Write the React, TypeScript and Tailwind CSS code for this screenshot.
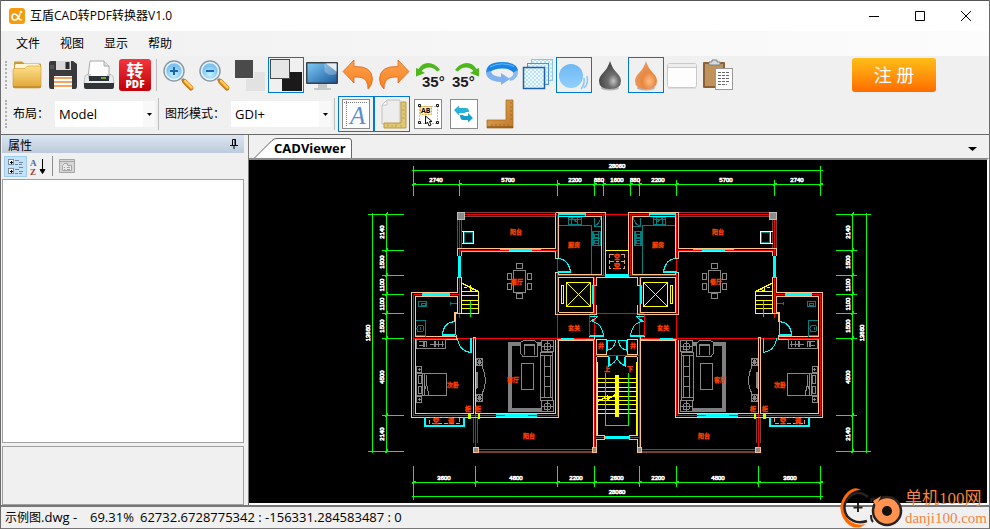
import React from 'react';

const UI_FONT = "font-['Open_Sans','Noto_Sans_CJK_SC',sans-serif]";

type IconProps = { children: React.ReactNode };

const Icon: React.FC<IconProps> = ({ children }) => (
  <svg viewBox="0 0 36 36" className="block size-full" aria-hidden="true">
    {children}
  </svg>
);

const FolderIcon = () => (
  <Icon>
    <path d="M5 8V5.500q0-1 1-1h7l2.500 2H31q1 0 1 1V27H5z" fill="#c99a3c" />
    <path d="M7 7h22l2 1v6H6V8z" fill="#fff6d8" />
    <path d="M4 13q0-1.500 1.500-1.500H16l2.500-2.500H30.500q1.500 0 1.500 1.500V29q0 2-2 2H6q-2 0-2-2z" fill="url(#folder)" stroke="#d0972b" strokeWidth=".6" />
    <path d="M4 30h28" stroke="#b07a20" />
    <defs>
      <linearGradient id="folder" x2="0" y2="1">
        <stop stopColor="#ffe08c" />
        <stop offset="1" stopColor="#dfa636" />
      </linearGradient>
    </defs>
  </Icon>
);

const SaveIcon = () => (
  <Icon>
    <path d="M6 4h22l4 3v22q0 3-2 3H6q-2 0-2-3V6q0-2 2-2z" fill="#3a3a3c" />
    <path d="M11 4h15v9H11z" fill="#d9d9dc" />
    <path d="M20.500 5h4v7h-4z" fill="#2b2b2d" />
    <path d="M9 19h18v13H9z" fill="#fff" />
    <path d="M9 21h18M9 25h18M9 29h18" stroke="#f6a35c" strokeWidth="2" />
    <path d="M5 8h4v4H5z" fill="#55565a" />
  </Icon>
);

const PrintIcon = () => (
  <Icon>
    <path d="M9 4h14l5 5v11H7z" fill="#fdfdfd" stroke="#aaa" />
    <path d="M23 4v5h5" fill="#e3e3e3" stroke="#aaa" />
    <path d="M3 25l4-8h3v4h16v-4h3l4 8v5H3z" fill="#cfd2d5" />
    <path d="M4 19l3-2 1 5h20l1-5 3 2 1 8H3z" fill="#e9ebed" stroke="#a5a8ab" strokeWidth=".6" />
    <path d="M8 19h20v5H8z" fill="#2c3237" />
    <path d="M20 21h5" stroke="#7dd13a" strokeWidth="1.500" />
    <path d="M3 26h30v4q0 2-2 2H5q-2 0-2-2z" fill="#303437" />
  </Icon>
);

const PdfIcon = () => (
  <Icon>
    <rect x="2" y="2" width="32" height="32" rx="3" fill="url(#pdf)" />
    <text x="18" y="20" textAnchor="middle" fontSize="17" fontWeight="700" fill="#fff" className="font-['Noto_Sans_CJK_SC',sans-serif]">转</text>
    <text x="18" y="31" textAnchor="middle" fontSize="10" fontWeight="800" fill="#fff">PDF</text>
    <defs>
      <linearGradient id="pdf" x2="0" y2="1">
        <stop stopColor="#f5353b" />
        <stop offset="1" stopColor="#c00008" />
      </linearGradient>
    </defs>
  </Icon>
);

const ZoomIcon: React.FC<{ plus?: boolean }> = ({ plus }) => (
  <Icon>
    <path d="M22 22l3 3" stroke="#888" strokeWidth="3" />
    <path d="M24.500 24.500l6.500 6.500" stroke="#c77f19" strokeWidth="5" strokeLinecap="round" />
    <path d="M25 24l6.500 6.500" stroke="#ffc65a" strokeWidth="2.500" strokeLinecap="round" />
    <circle cx="14" cy="14" r="10" fill="#8dd0fa" stroke="#8c979f" strokeWidth="1.500" />
    <circle cx="14" cy="14" r="8.500" fill="url(#lens)" stroke="#e8f5ff" strokeWidth="1.500" />
    <path d={plus ? 'M10 14h8M14 10v8' : 'M10 14h8'} stroke="#1767ad" strokeWidth="2" />
    <defs>
      <radialGradient id="lens" cy=".7">
        <stop stopColor="#c9f0ff" />
        <stop offset="1" stopColor="#7cc3f2" />
      </radialGradient>
    </defs>
  </Icon>
);

const DarkBackIcon = () => (
  <Icon>
    <rect x="14" y="15" width="19" height="19" fill="#e2e2e2" />
    <rect x="2" y="2" width="20" height="20" fill="#f0f0f0" />
    <rect x="3" y="3" width="18" height="18" fill="#4a4a4a" />
  </Icon>
);

const LightBackIcon = () => (
  <Icon>
    <rect x="14" y="15" width="20" height="19" fill="#1a1a1a" />
    <rect x="2.500" y="2.500" width="19" height="19" fill="#e6e6e6" stroke="#4a4a4a" />
  </Icon>
);

const MonitorIcon = () => (
  <Icon>
    <path d="M14 27h9v4h4v2H10v-2h4z" fill="#c6c9cc" />
    <rect x="2" y="5" width="32" height="22" rx="1" fill="#3b4147" />
    <rect x="3.500" y="6.500" width="29" height="19" fill="url(#screen)" />
    <path d="M20 6.500h12.500V17q-8 3-12-3z" fill="#fff" opacity=".25" />
    <path d="M22 6.500l10.500 8v-8z" fill="#e6edf2" />
    <defs>
      <linearGradient id="screen" x2="1" y2="1">
        <stop stopColor="#7fc9f4" />
        <stop offset="1" stopColor="#1c5c9f" />
      </linearGradient>
    </defs>
  </Icon>
);

const TurnIcon: React.FC<{ forward?: boolean }> = ({ forward }) => (
  <Icon>
    <g transform={forward ? 'translate(36 0) scale(-1 1)' : undefined}>
      <path d="M3 14.500L14 3v6.500q18-1 18.500 12.500q0 6-4.500 10q0-10-7-11.500-3-.5-7-.5v6z" fill="url(#turn)" stroke="#d65f16" strokeWidth=".7" />
      <defs>
        <linearGradient id="turn" x2="0" y2="1">
          <stop stopColor="#ffa04e" />
          <stop offset="1" stopColor="#f5821f" />
        </linearGradient>
      </defs>
    </g>
  </Icon>
);

const RotateIcon: React.FC<{ right?: boolean }> = ({ right }) => (
  <Icon>
    <path
      d="M4 11v8.500l9-3.500-3.500-2q3-3.500 7.500-3.500 5 0 8 4l3-1.500Q23 6 16 6q-6 0-9.500 6z"
      fill="#4cb81a"
      transform={right ? 'translate(35 0) scale(-1 1)' : undefined}
    />
    <text x={right ? 4 : 10} y="30" fontSize="15" fontWeight="700" fill="#1c1c1c" className="font-['Liberation_Sans',sans-serif]">35°</text>
  </Icon>
);

const OrbitIcon = () => (
  <Icon>
    <path d="M2 16Q2 5 18 5t16 10q-3 5-6 6 3-4 1-6-3-3.500-11-3.500T6 15z" fill="#1c86e8" />
    <path d="M2 15l5-1q0 5 10 6v-4l9 6-9 6v-3Q2 24 2 15z" fill="#7fb0f0" />
    <path d="M34 13q1 9-8 11l-1-3q5-2 5-6z" fill="#8dbbf0" />
    <path d="M6 10Q18 4 30 9.500" fill="none" stroke="#60b9ff" />
  </Icon>
);

const LayersIcon = () => (
  <Icon>
    <defs>
      <pattern id="check" width="4" height="4" patternUnits="userSpaceOnUse">
        <path d="M0 0h4v4H0z" fill="#f2fafe" />
        <path d="M0 0h2v2H0zM2 2h2v2H2z" fill="#b8e3f7" />
      </pattern>
    </defs>
    <rect x="11.500" y="2.500" width="21" height="21" fill="url(#check)" stroke="#8fc3ea" />
    <rect x="7.500" y="6.500" width="21" height="21" fill="url(#check)" stroke="#4e93d2" />
    <rect x="3.500" y="10.500" width="21" height="21" fill="url(#check)" stroke="#1e60aa" strokeWidth="1.500" />
  </Icon>
);

const SmoothIcon = () => (
  <Icon>
    <circle cx="15" cy="19" r="12" fill="url(#ball)" />
    <path d="M28 31q5-5 3-12M25 32q4-5 3-11" fill="none" stroke="#8ac6fa" strokeWidth="1.500" />
    <defs>
      <linearGradient id="ball" x2="0" y2="1">
        <stop stopColor="#70b7f5" />
        <stop offset="1" stopColor="#8fd0fc" />
      </linearGradient>
    </defs>
  </Icon>
);

const DropIcon: React.FC<{ dark?: boolean }> = ({ dark }) => (
  <Icon>
    <ellipse cx="18" cy="31" rx="9" ry="2.500" fill="#777" opacity=".5" />
    <path d="M18 4q2 7 7 12 4 4 4 8 0 8-11 8T7 24q0-4 4-8 5-5 7-12z" fill={dark ? 'url(#inkDark)' : 'url(#inkOrange)'} />
    <defs>
      <radialGradient id="inkDark" cx=".65" cy=".72" r=".6">
        <stop stopColor="#c4c4c4" />
        <stop offset=".4" stopColor="#6e6e6e" />
        <stop offset="1" stopColor="#4a4a4a" />
      </radialGradient>
      <radialGradient id="inkOrange" cx=".65" cy=".72" r=".7">
        <stop stopColor="#ffbd84" />
        <stop offset=".45" stopColor="#ea8640" />
        <stop offset="1" stopColor="#e79c66" />
      </radialGradient>
    </defs>
  </Icon>
);

const WindowIcon = () => (
  <Icon>
    <path d="M4 31h28" stroke="#ddd" strokeWidth="2" />
    <rect x="3.500" y="6.500" width="29" height="24" rx="2" fill="#fdfdfd" stroke="#c9c9c9" />
    <path d="M4 7h28v3H4z" fill="#ededed" />
    <path d="M4 10.500h28" stroke="#c9c9c9" />
  </Icon>
);

const ClipboardIcon = () => (
  <Icon>
    <rect x="3" y="5" width="22" height="26" rx="1" fill="#8d6035" />
    <rect x="5" y="7" width="18" height="22" fill="#c0935d" />
    <path d="M9 8V5h3V3h5v2h3v3z" fill="#d7dbde" stroke="#7a8186" />
    <rect x="15.500" y="11.500" width="17" height="21" fill="#fff" stroke="#999" />
    <path d="M18 15.500h12M18 18.500h12M18 21.500h12M18 24.500h12M18 27.500h9" stroke="#666" strokeDasharray="3 1" />
  </Icon>
);

const TextIcon = () => (
  <Icon>
    <rect x="4.500" y="3.500" width="27" height="29" fill="#fff" stroke="#8b8b8b" />
    <path d="M8.500 5v26M6 6.500h24" stroke="#777" strokeDasharray="1 1" />
    <text x="12" y="28" fontSize="25" fontStyle="italic" fill="#5b8fcb" className="font-['Liberation_Serif',serif]">A</text>
  </Icon>
);

const PageRulerIcon = () => (
  <Icon>
    <path d="M8 9l5-5h13v24H8z" fill="#ededed" stroke="#c2c2c2" />
    <path d="M8 9h5V4z" fill="#fff" stroke="#c2c2c2" />
    <path d="M27 6h5v26H10v-5h17z" fill="#e1c772" stroke="#b99a45" />
    <path d="M31 10h-2M31 14h-3M31 18h-2M31 22h-3M27 31v-2M22 31v-3M18 31v-2M14 31v-3" stroke="#a58a3c" strokeWidth=".6" />
  </Icon>
);

const SelectTextIcon = () => (
  <Icon>
    <rect x="4.500" y="3.500" width="27" height="29" fill="#fff" stroke="#8b8b8b" />
    <rect x="9.500" y="10.500" width="18" height="17" fill="none" stroke="#777" strokeDasharray="1 2" />
    <rect x="10.500" y="10.500" width="11" height="8" fill="#fff2cc" stroke="#e0a634" strokeDasharray="2 1" />
    <text x="11" y="17" fontSize="7" fontWeight="700">AB</text>
    <path d="M8.500 8.500h2v2h-2zM26.500 8.500h2v2h-2zM8.500 25.500h2v2h-2zM26.500 25.500h2v2h-2z" fill="#fff" stroke="#111" />
    <path d="M15.500 20v8l2-2 1.500 4 2-1-1.500-3.500H22z" fill="#fff" stroke="#111" />
  </Icon>
);

const SwapIcon = () => (
  <Icon>
    <rect x="4.500" y="3.500" width="27" height="29" fill="#fff" stroke="#8b8b8b" />
    <path d="M8 14l5-4.500V12h7q3 0 3 4h-3q-.5 1-2 1h-5v2.500z" fill="#27b0da" />
    <path d="M27 22l-5 4.500V24h-5q-3 0-3-5h3q.5 1 2 1h3v-3z" fill="#149fce" />
  </Icon>
);

const SquareIcon = () => (
  <Icon>
    <path d="M24 4h7v28H5v-8h19z" fill="url(#wood)" stroke="#a5691f" strokeWidth=".7" />
    <path d="M5 31h26" stroke="#7d4a10" />
    <path d="M30 7h-2M30 11h-2M30 15h-2M30 19h-2M30 23h-2M26 30v-2M22 30v-2M18 30v-2M14 30v-2M10 30v-2" stroke="#8a5a1c" strokeWidth=".6" />
    <defs>
      <linearGradient id="wood" x2="1" y2="1">
        <stop stopColor="#e5a95a" />
        <stop offset="1" stopColor="#c07a2a" />
      </linearGradient>
    </defs>
  </Icon>
);

type Tool = { label: string; icon: React.ReactNode; active?: boolean };

const ToolButton: React.FC<Tool> = ({ label, icon, active }) => (
  <button
    type="button"
    aria-label={label}
    aria-pressed={active}
    className={active ? 'size-9 shrink-0 outline -outline-offset-1 outline-[#0078d7]' : 'size-9 shrink-0'}
  >
    {icon}
  </button>
);

const Separator = () => <div className="mx-[3px] h-8 w-px shrink-0 bg-[#bdbdbd]" />;

const Grip = () => <div className="ml-1 h-7 w-[2px] shrink-0 border-l-2 border-dotted border-[#b0b0b0]" />;

const fileTools: Tool[] = [
  { label: '打开', icon: <FolderIcon /> },
  { label: '保存', icon: <SaveIcon /> },
  { label: '打印', icon: <PrintIcon /> },
  { label: '转PDF', icon: <PdfIcon /> },
];

const viewTools: Tool[] = [
  { label: '放大', icon: <ZoomIcon plus /> },
  { label: '缩小', icon: <ZoomIcon /> },
  { label: '白色背景', icon: <DarkBackIcon /> },
  { label: '黑色背景', icon: <LightBackIcon />, active: true },
  { label: '全屏', icon: <MonitorIcon /> },
  { label: '撤销', icon: <TurnIcon /> },
  { label: '重做', icon: <TurnIcon forward /> },
  { label: '向左旋转', icon: <RotateIcon /> },
  { label: '向右旋转', icon: <RotateIcon right /> },
  { label: '三维旋转', icon: <OrbitIcon /> },
  { label: '图层', icon: <LayersIcon /> },
  { label: '平滑', icon: <SmoothIcon />, active: true },
  { label: '黑白', icon: <DropIcon dark /> },
  { label: '彩色', icon: <DropIcon />, active: true },
  { label: '窗口', icon: <WindowIcon /> },
  { label: '粘贴', icon: <ClipboardIcon /> },
];

const drawTools: Tool[] = [
  { label: '文字', icon: <TextIcon />, active: true },
  { label: '标注', icon: <PageRulerIcon />, active: true },
  { label: '选择文字', icon: <SelectTextIcon /> },
  { label: '替换', icon: <SwapIcon /> },
  { label: '测量', icon: <SquareIcon /> },
];

const Dropdown: React.FC<{ id: string; value: string }> = ({ id, value }) => (
  <div className="relative h-[26px] w-[100px] shrink-0 bg-white">
    <select id={id} defaultValue={value} className="size-full appearance-none pl-1 text-[13px] outline-none">
      <option>{value}</option>
    </select>
    <span className="pointer-events-none absolute inset-y-0 right-0 flex w-3 items-center justify-center bg-[#f8f8f8]">
      <svg viewBox="0 0 5 3" className="h-[3px] w-[5px]"><path d="M0 0h5L2.500 3z" /></svg>
    </span>
  </div>
);

const TitleBar = () => (
  <header className="flex h-[31px] shrink-0 items-center border-t border-[#555] bg-white pl-2">
    <svg viewBox="0 0 16 16" className="size-4">
      <rect width="16" height="16" rx="3" fill="#f79a0c" />
      <path d="M11 5.500Q9.500 12 5.500 12 3 12 3 9t2.500-3q2.500 0 4 4 .8 2 3.500 2" fill="none" stroke="#fff" strokeWidth="1.600" />
      <circle cx="12" cy="4" r="1.300" fill="#fff" />
    </svg>
    <h1 className="ml-[5px] text-xs">互盾CAD转PDF转换器V1.0</h1>
    <div className="ml-auto flex h-full">
      {[
        ['最小化', 'M0 5.500h10'],
        ['最大化', 'M.5.5h9v9h-9z'],
        ['关闭', 'M0 0l10 10M10 0L0 10'],
      ].map(([label, path]) => (
        <button key={label} type="button" aria-label={label} className="flex w-[46px] items-center justify-center">
          <svg viewBox="0 0 10 10" className="size-[10px] overflow-visible" fill="none" stroke="#000"><path d={path} /></svg>
        </button>
      ))}
    </div>
  </header>
);

const MenuBar = () => (
  <nav className="flex h-[25px] shrink-0 items-center bg-linear-to-r from-[#f0f0f0] to-[#fcfcfc] pl-[5px]">
    {['文件', '视图', '显示', '帮助'].map((item) => (
      <button key={item} type="button" className="px-[10px] text-xs">{item}</button>
    ))}
  </nav>
);

const Toolbars = () => (
  <div className="shrink-0">
    <div className="flex h-[38px] items-center">
      <Grip />
      <div className="ml-[2px] flex items-center">
        {fileTools.map((tool) => <ToolButton key={tool.label} {...tool} />)}
        <Separator />
        {viewTools.map((tool) => <ToolButton key={tool.label} {...tool} />)}
      </div>
      <button type="button" className="mr-[53px] ml-auto h-[34px] w-[84px] rounded-[3px] bg-linear-to-b from-[#ffbd17] to-[#ff6b00] text-lg leading-none text-white">
        注 册
      </button>
    </div>
    <div className="flex h-10 items-center">
      <Grip />
      <label htmlFor="layout" className="ml-[6px] w-[42px] text-xs">布局：</label>
      <Dropdown id="layout" value="Model" />
      <Separator />
      <label htmlFor="mode" className="ml-[3px] w-[66px] text-xs whitespace-nowrap">图形模式：</label>
      <Dropdown id="mode" value="GDI+" />
      <Separator />
      {drawTools.map((tool) => <ToolButton key={tool.label} {...tool} />)}
    </div>
  </div>
);

const PropertyPanel = () => (
  <aside className="flex w-[243px] shrink-0 flex-col pl-px">
    <div className="flex h-[18px] items-center justify-between bg-linear-to-b from-[#dbe6f2] to-[#bdcbdc] px-[6px]">
      <h2 className="pt-1 text-xs leading-4">属性</h2>
      <button type="button" aria-label="固定" className="h-[10px] w-2">
        <svg viewBox="0 0 8 10" className="block size-full" fill="none" stroke="#000"><path d="M2.500 6V.5h3V6M5 .5V6M0 6.500h8M4 6v4" /></svg>
      </button>
    </div>
    <div className="flex h-[26px] items-center pl-[2px]">
      <button type="button" aria-label="分类" className="flex h-[21px] w-[23px] items-center justify-center border border-[#9bcdf3] bg-[#c5e1f7]">
        <svg viewBox="0 0 17 17" className="size-[17px]" shapeRendering="crispEdges">
          <path d="M1.500 1.500h5v5h-5zM1.500 10.500h5v5h-5z" fill="#fff" stroke="#7b8da5" />
          <path d="M2.500 4h3M4 2.500v3M2.500 13h3M4 11.500v3" stroke="#000" />
          <path d="M8 2.500h4M8 6.500h3M12 6.500h3M8 11.500h4M8 15.500h3M12 15.500h3M12 4.500h4M12 9.500h4M12 13.500h4" stroke="#71839d" />
        </svg>
      </button>
      <button type="button" aria-label="排序" className="ml-[3px] h-[17px] w-4">
        <svg viewBox="0 0 16 17" className="block size-full overflow-visible">
          <text x="0" y="8" fontSize="9" fontWeight="700" fill="#3d66b5" className="font-['Liberation_Serif',serif]">A</text>
          <text x="0" y="17" fontSize="9" fontWeight="700" fill="#a23b3b" className="font-['Liberation_Serif',serif]">Z</text>
          <path d="M12.500 1v14M10 11.500l2.500 4 2.500-4z" stroke="#000" />
        </svg>
      </button>
      <div className="mx-[6px] h-5 w-px bg-[#8e8e8e]" />
      <button type="button" aria-label="属性页" disabled className="size-4">
        <svg viewBox="0 0 16 16" className="block size-full" fill="none" stroke="#a5a5a5">
          <path d="M.5 1.500h15v13H.5z" fill="#d6d6d6" /><path d="M.5 3.500h15" /><path d="M3.500 7.500l2-2h3v2h4v5h-9z" fill="#e7e7e7" /><path d="M5 9.500h1M8 9.500h3M5 11.500h1M8 11.500h3" />
        </svg>
      </button>
    </div>
    <div className="flex-1 border border-[#a0a0a0] bg-white" />
    <div className="mt-[3px] h-[59px] shrink-0 border border-[#a0a0a0]" />
  </aside>
);

/* Geometry of one flat; the other one is its mirror image. */
const Flat = () => (
  <g fill="none">
    <g stroke="#7a4038">
      <path d="M465 212.500H556M465 216.500H556M457.500 220V249M461.500 220V249" />
      <path d="M473.500 418V443M477.500 418V443M478 449.500H592M478 452.500H592" />
    </g>
    <g stroke="#f00">
      <path d="M465 214.500H557M459.500 220V294.500M459.500 250.500H557.500M557.500 214.500V338.500M557.500 214.500H617M603.500 214.500V275.500M557.500 275.500H605" />
      <path d="M413.500 294.500H459.500M413.500 294.500V415.500H557.500V339M459.500 294V318M413.500 338.500H594.500M475.500 338V451.500H594.500M594.500 277V451.500" />
      <path d="M590 313.500H617M589.500 314V338M594.500 355.500H617M594.500 437.500H617" />
    </g>
    <g stroke="#ffc38a">
      <path d="M457.500 256V248.500H555.500V213M461.500 256V251.500H555.500V258.500H558.500V216.500H601.500V274.500H558.500V272.500H555.500V314.500H596.500V304.500M555.500 212.500H605.500V277" />
      <path d="M558.500 312.500H593.500V303M558.500 312V277.500H593.500V285.500H596.500V277.500H617" />
      <path d="M457.500 277V292.500H411.500V417.500H558.500V340.500H593.500V452M461.500 277V313.500H455.500V321M415.500 336.500V296.500H457.500V312.500H454.500V321H456M415.500 336.500H456M415.500 413.500V339.500H456V335M415.500 413.500H473.500V337.500H475.500V413.500H555.500V340M557 339.500H562M586 339.500H594V336.500H589" />
      <path d="M596.500 339.500H606.500V354.500H596.500zM597 356.500H609M596.500 357V435.500H604.500V439.500H596.500V452.500H592.500V447.500H596.500" />
    </g>
    <g fill="#8c8c8c" stroke="#ffbf80">
      <path d="M457.500 212.500h7v7h-7z" stroke="#bbb" />
      <path d="M473.500 447.500h5v5h-5zM592.500 447.500h4v5h-4z" />
    </g>
    <g stroke="#0ff">
      <path d="M500 249.500H541M509 250.500H532M558.500 213.500H585V216.500H558.500zM558 214.500H585M422.500 293.500H449V295.500H422.500zM422 294.500H449M458.500 256V278M460.500 256V278M459.500 256V278" />
      <path d="M496 414.500H537M496 416.500H537M505 415.500H528M561 339.500H586M561 338.500H574M426 413.500H462M604.500 436.500H617M604.500 438.500H617M604 437.500H617" />
      <path d="M605 274.500H617M605 275.500H617M605 276.500H617M592.500 285V304M593.500 285V304" />
      <path d="M424.500 417V426.500H464.500V417M424 425.500H464M425.500 417V426M463.500 417V426" />
      <path d="M558.500 258.500Q568 259 570.500 271.500H558V272.500H571" />
      <path d="M454.500 321.500Q443 323 442.500 334.500H455V321M442 335.500H455" />
      <path d="M457.500 338Q459 351 471 352.500V338M470.500 338V352" />
      <path d="M590 316.500H597L593 321.500Q602 324 603.500 335.500H590M590 336.500H604M590 322L594 319" />
      <path d="M606.500 340V350.500Q615 349 615.500 340.500H606M607.500 340V350M608.500 356V366Q616 363 617.500 356M609.500 357V365" />
    </g>
    <g stroke="#008080">
      <path d="M559 225.500H591.500V274M568.500 217.500H581V224.500H568.500zM568 219.500H581M572 218L578 223M571.500 218V224M577.500 218V224M594 217.500V226.500H601M594 226Q600 224 600.500 217M592.500 231.500H600V245.500H592.500zM594 234.500h4v3h-4zM594 240.500h4v3h-4zM592 238.500H600M593.500 232V245M598.500 232V245" />
      <path d="M418.500 301.500h8v5h-8zM421 303h4v2h-4zM450 303.500h7M450.500 302v3M416 320.500H425.500V337M416 335h9" />
      <circle cx="420.500" cy="328.500" r="3.500" />
      <path d="M420 327v3" />
    </g>
    <path d="M461.500 231.500H473.500V243.500H461.500M463.500 231V244" stroke="#fff" />
    <path d="M464.500 232.500H472.500V242.500H464.500z" stroke="#008080" />
    <g stroke="#ff0">
      <path d="M461.500 313.500V283L478.500 291.500V313.500M461 291.500H478M461 295.500H478M461 300.500H478M461 304.500H478M461 308.500H478M461 313.500H478M464 288L470 286V291L474 289" />
      <path d="M566.500 282.500H590.500V306.500H566.500zM567 283L590 306M590 283L567 306M561.500 285.500H563.500V303.500H561.500z" />
      <path d="M605 250.500H617M597.500 362V435M597 378.500H617M597 382.500H617M597 387.500H617M597 391.500H617M597 396.500H617M597 400.500H617M597 404.500H617M597 409.500H617M597 413.500H617" />
      <path d="M468 416.500h3M478 416.500h2" strokeWidth="5" stroke="#bfff00" />
    </g>
    <path d="M470.500 301V317M605.500 373V425.500H617" stroke="#0f0" />
    <g stroke="#888">
      <path d="M513.500 270.500H525.500V292.500H513.500zM516.500 263.500h6v5h-6zM516.500 293.500h6v5h-6zM507.500 273.500h4v6h-4zM507.500 283.500h4v6h-4zM527.500 273.500h4v6h-4zM527.500 283.500h4v6h-4z" />
      <path d="M416.500 339.500H445.500V348.500H416.500zM419 341.500h8M419 345.500h6M423.500 341V347M424.500 341V347M426.500 341V347M430 344.500h14M434.500 341V347M435.500 341V347M438.500 341V347M442.500 341V347" />
      <path d="M416.500 373.500H446.500V395.500H416.500zM422.500 373V395M424.500 374V395M426.500 375V385L424 392M427 386L429 395M416.500 366.500h5v6h-5zM416.500 396.500h5v6h-5zM418 369.500h3M419.500 368v3M418 399.500h3M419.500 398v3M418.500 375.500h3v8h-3zM418.500 386.500h3v7h-3z" />
      <path d="M476.500 358.500h6v7h-6zM476.500 394.500h6v7h-6zM476.500 372V388.500M477.500 372V388M482 366Q489 381 482 394M476 362.500h6M479.500 358v7M477 359l5 6M482 359l-5 6M476 398.500h6M479.500 394v7M477 395l5 6M482 395l-5 6" />
      <path d="M520.500 353.500V342.500L524 340.500H534L537.500 343V356.500H523L520.500 353M524.500 355V345H534.500V355M524 344.500H535" />
      <path d="M521.500 363.500H533.500V389.500H521.500z" />
      <path d="M540.500 352.500H552.500V400.500H540.500zM544.500 355V397M540 355.500H552M540 397.500H552M544 366.500H550M544 376.500H550M544 386.500H550M550.500 355V397" />
      <path d="M541.500 340.500h12v11h-12zM541.500 400.500h12v11h-12zM541 346.500h12M547.500 341v11M541 406.500h12M547.500 401v11" />
      <circle cx="547.500" cy="346.500" r="3.500" />
      <circle cx="547.500" cy="406.500" r="3.500" />
      <path d="M520 344H510V410H541" strokeWidth="4" stroke="#808080" />
      <path d="M538 344h4" strokeWidth="4" />
    </g>
    <path d="M429.500 417.500H459.500V423.500H429.500zM609.500 254.500H617M609.500 254V268.500H617M609.500 261.500H617" stroke="#d9a36c" strokeDasharray="4 2" />
  </g>
);

const topStops = [413.5, 459.5, 557.5, 594.5, 603.5, 630.5, 639.5, 676.5, 774.5, 820.5];
const bottomStops = [413.5, 475.5, 557.5, 594.5, 639.5, 676.5, 758.5, 820.5];
const sideStops = [214.5, 250.5, 275.5, 294.5, 313.5, 338.5, 415.5, 451.5];

const widths: [number, number, string][] = [
  [617, 168, '28060'], [436, 182, '2740'], [508, 182, '5700'], [575, 182, '2200'], [599, 182, '880'], [617, 182, '1600'],
  [635, 182, '880'], [658, 182, '2200'], [726, 182, '5700'], [797, 182, '2740'],
  [444, 480, '3600'], [516, 480, '4800'], [576, 480, '2200'], [617, 480, '2600'], [658, 480, '2200'], [718, 480, '4800'],
  [790, 480, '3600'], [617, 494, '28060'],
];

const heights: [number, string][] = [[232, '2140'], [262, '1500'], [285, '1100'], [304, '1100'], [326, '1500'], [377, '4500'], [434, '2140']];

const rooms: [number, number, string][] = [
  [516, 234, '阳台'], [718, 234, '阳台'], [574, 247, '厨房'], [658, 247, '厨房'], [517, 284, '餐厅'], [716, 284, '餐厅'],
  [574, 330, '玄关'], [663, 330, '玄关'], [453, 387, '次卧'], [780, 387, '次卧'], [513, 382, '客厅'], [720, 382, '客厅'],
  [529, 438, '阳台'], [704, 438, '阳台'], [607, 371, '上'], [630, 371, '下'], [601, 348, '井'], [633, 348, '井'],
  [617, 259, '空'], [617, 268, '空'], [436, 423, '空'], [451, 423, '调'], [783, 423, '空'], [798, 423, '调'],
  [468, 411, '柜'], [478, 411, '柜'], [753, 411, '柜'], [765, 411, '柜'],
];

const FloorPlan = () => (
  <svg viewBox="249 160 738 343" role="img" aria-label="CAD" className="block size-full" shapeRendering="crispEdges">
    <g stroke="#0f0" fill="none">
      <path d="M412 170.500H823M412 184.500H823M412 482.500H823M412 496.500H823M413.500 166V196M820.500 166V196M413.500 466V500M820.500 466V500" />
      {topStops.map((x) => <path key={x} d={`M${x} 180V196M${x - 1} 186l3-3`} />)}
      {bottomStops.map((x) => <path key={x} d={`M${x} 466V487M${x - 1} 484l3-3`} />)}
      <path d="M372.500 213V453M386.500 213V453M852.500 213V453M866.500 213V453M368 214.500H404M368 451.500H404M836 214.500H871M836 451.500H871" />
      {sideStops.map((y) => <path key={y} d={`M382 ${y}H404M836 ${y}H857M385 ${y + 1}l3-3M851 ${y + 1}l3-3`} />)}
    </g>
    <Flat />
    <g transform="translate(1234 0) scale(-1 1)">
      <Flat />
    </g>
    <path d="M615 375h4v42h-4z" fill="#ff0" />
    <path d="M597 402L607 396V400L616 394M598 400L612 397" fill="none" stroke="#ff0" />
    <g fill="#fff" stroke="#fff" strokeWidth=".6" fontSize="6" textAnchor="middle" className="font-['Liberation_Sans',sans-serif]">
      {widths.map(([x, y, text]) => <text key={`${x}-${y}`} x={x} y={y}>{text}</text>)}
      {heights.map(([y, text]) => (
        <React.Fragment key={y}>
          <text transform={`translate(384 ${y}) rotate(-90)`}>{text}</text>
          <text transform={`translate(850 ${y}) rotate(-90)`}>{text}</text>
        </React.Fragment>
      ))}
      <text transform="translate(370 333) rotate(-90)">13860</text>
      <text transform="translate(864 333) rotate(-90)">13860</text>
    </g>
    <g fill="#ff4000" stroke="#ff4000" strokeWidth=".3" fontSize="6" fontWeight="700" textAnchor="middle" className="font-['Noto_Sans_CJK_SC',sans-serif]">
      {rooms.map(([x, y, text]) => <text key={`${x}-${y}`} x={x} y={y}>{text}</text>)}
    </g>
  </svg>
);

const Viewer = () => (
  <main className="ml-1 flex min-w-0 flex-1 flex-col border-l border-[#7a7a7a]">
    <div className="flex h-[23px] shrink-0 items-end justify-between pr-3">
      <button type="button" className="relative h-5 w-[103px]">
        <svg viewBox="0 0 103 20" className="absolute inset-0 size-full" fill="#fff" stroke="#696969">
          <path d="M0 20.500H5L23 2.500Q25 .5 28 .5H100Q102.500.5 102.500 3V21" />
        </svg>
        <span className="relative block pl-[25px] text-left text-[13px] leading-5 font-bold whitespace-nowrap">CADViewer</span>
      </button>
      <button type="button" aria-label="窗口列表" className="mb-[7px] h-1 w-[9px]">
        <svg viewBox="0 0 9 4" className="block size-full"><path d="M0 0h9L4.500 4z" /></svg>
      </button>
    </div>
    <div className="min-h-0 flex-1 border-t-2 border-r-2 border-b-2 border-[#8a8a8a] border-r-white border-b-white bg-black">
      <FloorPlan />
    </div>
  </main>
);

const Watermark = () => (
  <div className="pointer-events-none absolute right-[2px] bottom-0 flex items-center text-[#f5853f]">
    <svg viewBox="0 0 64 42" className="h-[42px] w-16">
      <path d="M21 3Q13-2 5 8-3 19 3 31q7 12 18 9l5-3q-14 3-20-8Q1 17 9 8q5-5 12-5z" fill="#ff6a00" />
      <path d="M28 10Q18 2 9 10 1 19 7 29q8 9 20 5" fill="none" stroke="#2b2220" strokeWidth="2.500" />
      <path d="M13.500 20.500h9M18 16v9M31 15q0-5 3-3t0 6M31 28q0 5 2 7" fill="none" stroke="#2b2220" strokeWidth="2" />
      <circle cx="47" cy="24" r="14" fill="#ff934f" stroke="#2b2220" strokeWidth="2.500" />
      <circle cx="47" cy="24" r="5" fill="#15110f" />
      <path d="M33 14l8-5-5 10z" fill="#ff934f" />
    </svg>
    <div className="pl-px font-['Liberation_Serif','Noto_Sans_CJK_SC',serif]">
      <div className="text-[17px] leading-5">单机100网</div>
      <div className="text-[15px] leading-[18px]">danji100.com</div>
    </div>
  </div>
);

const StatusBar = () => (
  <footer className="flex h-6 shrink-0 items-center border-t-2 border-b border-[#777] pl-1 text-[13px] whitespace-pre">
    <span className="w-[85px]"><span className="text-xs">示例图</span>.dwg -</span>
    <span className="w-[50px]">69.31%</span>
    <span>62732.6728775342 : -156331.284583487 : 0</span>
  </footer>
);

const App: React.FC = () => (
  <div className={`relative flex h-screen flex-col overflow-hidden border-x border-[#6b6b6b] bg-[#f0f0f0] text-black ${UI_FONT}`}>
    <TitleBar />
    <MenuBar />
    <Toolbars />
    <div className="flex min-h-0 flex-1 border-t border-[#696969]">
      <PropertyPanel />
      <Viewer />
    </div>
    <StatusBar />
    <Watermark />
  </div>
);

export default App;
